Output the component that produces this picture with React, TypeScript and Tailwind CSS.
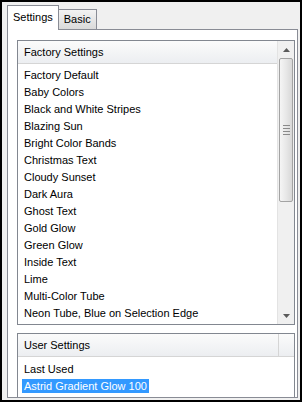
import React from 'react'

const factory = [
  'Factory Default',
  'Baby Colors',
  'Black and White Stripes',
  'Blazing Sun',
  'Bright Color Bands',
  'Christmas Text',
  'Cloudy Sunset',
  'Dark Aura',
  'Ghost Text',
  'Gold Glow',
  'Green Glow',
  'Inside Text',
  'Lime',
  'Multi-Color Tube',
  'Neon Tube, Blue on Selection Edge',
]

const user = ['Last Used', 'Astrid Gradient Glow 100', 'Astrid Gradient Glow 110']

const font = { fontFamily: '"Liberation Sans", Arial, sans-serif' }

function Header({ title }: { title: string }) {
  return (
    <div className="h-[23px] shrink-0 flex items-center pl-[6px] border-b border-[#d5d5d5] bg-gradient-to-b from-[#fbfbfb] to-[#eceef1] text-[11px] text-black">
      {title}
    </div>
  )
}

function ScrollBar() {
  return (
    <div className="w-[17px] shrink-0 flex flex-col bg-[#f0f0f0] border-l border-[#e3e3e3]">
      <div className="h-[17px] shrink-0 flex items-center justify-center">
        <svg width="7" height="4" viewBox="0 0 7 4">
          <path d="M0 4 L3.5 0 L7 4 Z" fill="#5a5a5a" />
        </svg>
      </div>
      <div className="h-[144px] shrink-0 mx-[1px] rounded-[2px] border border-[#a3a3a3] bg-gradient-to-r from-[#f5f5f5] via-[#e8e8e8] to-[#d8d8d8] flex items-center justify-center">
        <div className="flex flex-col gap-[2px]">
          <div className="w-[7px] h-px bg-[#8a8a8a]" />
          <div className="w-[7px] h-px bg-[#8a8a8a]" />
          <div className="w-[7px] h-px bg-[#8a8a8a]" />
          <div className="w-[7px] h-px bg-[#8a8a8a]" />
        </div>
      </div>
      <div className="flex-1" />
      <div className="h-[17px] shrink-0 flex items-center justify-center">
        <svg width="7" height="4" viewBox="0 0 7 4">
          <path d="M0 0 L3.5 4 L7 0 Z" fill="#5a5a5a" />
        </svg>
      </div>
    </div>
  )
}

export default function App() {
  return (
    <div className="w-[304px] h-[407px] bg-white" style={font}>
      <div className="w-[302px] h-[402px] border-2 border-black bg-[#f0f0f0] pt-[3px] pl-[5px] flex flex-col">
        {/* Tabs */}
        <div className="flex items-end h-[24px] relative z-10">
          <div className="h-[25px] -mb-px px-[5px] pt-[5px] bg-white border border-b-0 border-[#898c95] text-[11px] leading-[13px] text-black">
            Settings
          </div>
          <div className="h-[20px] px-[5px] pt-[3px] bg-gradient-to-b from-[#f3f3f3] to-[#dadada] border border-l-0 border-b-0 border-[#898c95] text-[11px] leading-[13px] text-black">
            Basic
          </div>
        </div>
        {/* Panel */}
        <div className="w-[291px] h-[369px] border border-[#898c95] bg-white pl-[9px] pr-[2px] pt-[10px] overflow-hidden flex flex-col gap-[8px]">
          <div className="h-[285px] shrink-0 border border-[#828790] flex">
            <div className="flex-1 flex flex-col">
              <Header title="Factory Settings" />
              <div className="pt-[3px] pl-[6px] text-[11px] text-black">
                {factory.map((f) => (
                  <div key={f} className="h-[17px] leading-[17px] whitespace-nowrap">
                    {f}
                  </div>
                ))}
              </div>
            </div>
            <ScrollBar />
          </div>
          <div className="h-[90px] shrink-0 border border-[#828790] flex flex-col">
            <div className="flex">
              <div className="flex-1">
                <Header title="User Settings" />
              </div>
              <div className="w-[16px] h-[23px] border-l border-b border-[#d5d5d5] bg-gradient-to-b from-[#fbfbfb] to-[#eceef1]" />
            </div>
            <div className="pt-[3px] pl-[4px] text-[11px] text-black">
              {user.map((u, i) => (
                <div key={u} className="h-[17px] flex items-center whitespace-nowrap">
                  <span
                    className={
                      i === 1
                        ? 'px-[2px] leading-[14px] bg-[#3399ff] text-white'
                        : 'px-[2px] leading-[14px]'
                    }
                  >
                    {u}
                  </span>
                </div>
              ))}
            </div>
          </div>
        </div>
      </div>
    </div>
  )
}
